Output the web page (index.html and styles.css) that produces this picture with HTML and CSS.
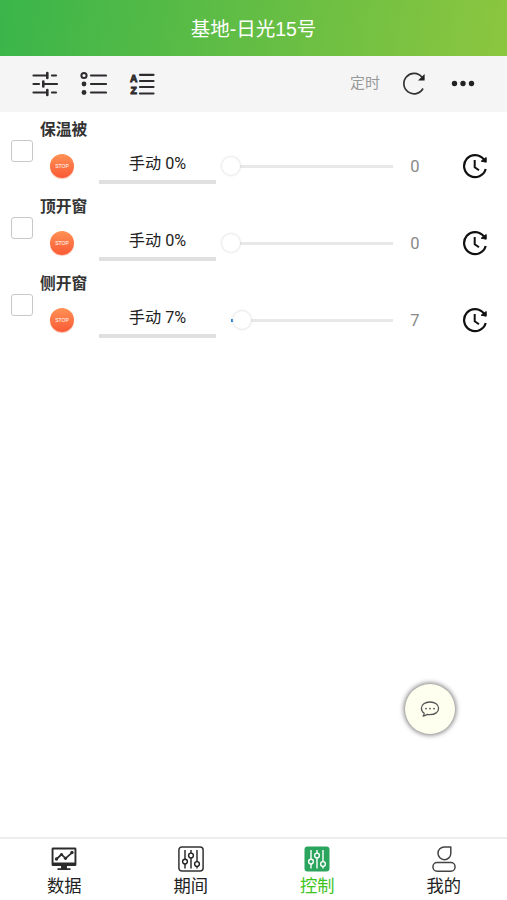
FILE: index.html
```html
<!DOCTYPE html>
<html lang="zh-CN">
<head>
<meta charset="utf-8">
<meta name="viewport" content="width=device-width, initial-scale=1">
<title>基地-日光15号</title>
<link rel="stylesheet" href="styles.css">
</head>
<body>
<svg class="symbols" aria-hidden="true">
  <symbol id="clock" viewBox="0 0 26 26">
    <path d="M22 6.600A11 11 0 1 0 23.700 16" fill="none" stroke="#111" stroke-width="2.200"/>
    <path d="M24.200 4.500v4.700l-5-1z" fill="#111" stroke="#111" stroke-width="1"/>
    <path d="M12.700 7v7.200l4.300 3" fill="none" stroke="#111" stroke-width="2"/>
  </symbol>
  <symbol id="mixer" viewBox="0 0 26 26">
    <g fill="none" stroke="currentColor" stroke-width="1.400">
      <path d="M7 4v9.200M7 18v4.500M13 4v3M13 12v10.500M19 4v11.600M19 20.400v2.100"/>
      <circle cx="7" cy="15.600" r="2.400"/><circle cx="13" cy="9.500" r="2.400"/><circle cx="19" cy="18" r="2.400"/>
    </g>
  </symbol>
</svg>
<header class="header"><h1>基地-日光15号</h1></header>
<div class="toolbar">
  <svg class="tool" width="28" height="28" viewBox="0 0 28 28" fill="none" stroke="#2e2b2e" stroke-width="2.200" stroke-linecap="round">
    <path d="M2.500 5.500H16M21 5.500h4M2.500 14H8M12 14h14M2.500 22.500H16M21 22.500h4"/>
    <path d="M16.300 3v5M12.300 11.500v5M16.300 20v5" stroke-width="2.600"/>
  </svg>
  <svg class="tool" width="28" height="28" viewBox="0 0 28 28" fill="none" stroke="#2e2b2e" stroke-width="2.200" stroke-linecap="round">
    <path d="M12 5.500h15M12 14h15M12 22.500h15"/>
    <circle cx="5" cy="5.500" r="2.600" stroke-width="2"/>
    <g fill="#2e2b2e" stroke="none"><circle cx="5" cy="14" r="2.400"/><circle cx="5" cy="22.500" r="2.400"/></g>
  </svg>
  <svg class="tool" width="28" height="28" viewBox="0 0 28 28" fill="none" stroke="#2e2b2e" stroke-width="2.200" stroke-linecap="round">
    <path d="M12 4.800h13.500M12 11h13.500M12 17h13.500M12 23.500h13.500"/>
    <g class="sort-letter" fill="#2e2b2e" stroke="#2e2b2e" stroke-width=".8" text-anchor="middle"><text x="5.600" y="11.800">A</text><text x="5.600" y="24.400">Z</text></g>
  </svg>
  <span class="timer">定时</span>
  <svg class="refresh" width="24" height="24" viewBox="0 0 24 24">
    <path d="M20 5.200A10.200 10.200 0 1 0 21 16.500" fill="none" stroke="#333" stroke-width="1.700"/>
    <path d="M22.600 2v6.500H16z" fill="#222"/>
  </svg>
  <svg class="more" width="24" height="8" viewBox="0 0 24 8" fill="#222"><circle cx="3.500" cy="3.500" r="2.700"/><circle cx="12" cy="3.500" r="2.700"/><circle cx="20.500" cy="3.500" r="2.700"/></svg>
</div>
<main class="devices">
  <section class="device">
    <span class="check"></span>
    <div class="body">
      <h2>保温被</h2>
      <div class="controls">
        <span class="stop">STOP</span><span class="mode">手动 0%</span>
        <span class="slider" style="--value:0"><i class="fill"></i><i class="thumb"></i></span>
        <span class="value">0</span><svg class="clock"><use href="#clock"/></svg>
      </div>
    </div>
  </section>
  <section class="device">
    <span class="check"></span>
    <div class="body">
      <h2>顶开窗</h2>
      <div class="controls">
        <span class="stop">STOP</span><span class="mode">手动 0%</span>
        <span class="slider" style="--value:0"><i class="fill"></i><i class="thumb"></i></span>
        <span class="value">0</span><svg class="clock"><use href="#clock"/></svg>
      </div>
    </div>
  </section>
  <section class="device">
    <span class="check"></span>
    <div class="body">
      <h2>侧开窗</h2>
      <div class="controls">
        <span class="stop">STOP</span><span class="mode">手动 7%</span>
        <span class="slider" style="--value:7"><i class="fill"></i><i class="thumb"></i></span>
        <span class="value">7</span><svg class="clock"><use href="#clock"/></svg>
      </div>
    </div>
  </section>
</main>
<div class="chat">
  <svg width="20" height="20" viewBox="0 0 20 20">
    <path d="M4.200 14.300C2.300 13 1.400 11.300 1.400 9.300c0-3.800 3.600-6.300 8.600-6.300s8.600 2.500 8.600 6.300-3.600 6.300-8.600 6.300c-1 0-1.900-.1-2.700-.3-1.200 1.100-2.500 1.600-4.200 1.800.7-.8 1.100-1.700 1.100-2.800z" fill="none" stroke="#555" stroke-width="1.300" stroke-linejoin="round"/>
    <g fill="#555"><circle cx="6" cy="9.600" r=".9"/><circle cx="10" cy="9.600" r=".9"/><circle cx="14" cy="9.600" r=".9"/></g>
  </svg>
</div>
<nav class="tabs">
  <a class="tab">
    <svg width="28" height="26" viewBox="0 0 28 26">
      <path d="M3 1.500h22a1.400 1.400 0 0 1 1.400 1.400v15.800a1.400 1.400 0 0 1-1.400 1.400H3a1.400 1.400 0 0 1-1.400-1.400V2.900A1.400 1.400 0 0 1 3 1.500zM3.500 3.400v13.200h21V3.400z" fill="#2b2b2b" fill-rule="evenodd"/>
      <path d="M11 20h6v2.200h3.500V24h-13v-1.800H11z" fill="#2b2b2b"/>
      <path d="M6.500 13l5-4.500 4 3.800 7-6" fill="none" stroke="#2b2b2b" stroke-width="1.700"/>
      <g fill="#2b2b2b"><circle cx="6.500" cy="13" r="1.700"/><circle cx="11.500" cy="8.500" r="1.600"/><circle cx="15.500" cy="12.300" r="1.600"/><circle cx="22" cy="6.500" r="1.700"/></g>
    </svg>
    <span>数据</span>
  </a>
  <a class="tab">
    <svg width="26" height="26" viewBox="0 0 26 26"><rect x=".9" y=".9" width="24.200" height="24.200" rx="3" fill="none" stroke="#333" stroke-width="1.500"/><use href="#mixer"/></svg>
    <span>期间</span>
  </a>
  <a class="tab active">
    <svg width="26" height="26" viewBox="0 0 26 26"><rect x=".5" y=".5" width="25" height="25" rx="3" fill="#2ba55d"/><use class="mixer-light" href="#mixer"/></svg>
    <span>控制</span>
  </a>
  <a class="tab">
    <svg width="26" height="26" viewBox="0 0 26 26" fill="none" stroke="#444" stroke-width="1.500" stroke-linejoin="round"><path d="M19.800 .9h-6.500a6.400 6.400 0 1 0 6.500 6.500z"/><rect x="2" y="16.500" width="22" height="8.700" rx="4"/></svg>
    <span>我的</span>
  </a>
</nav>
</body>
</html>
```
FILE: styles.css
```css
* { box-sizing: border-box; }
body {
  margin: 0;
  height: 900px;
  display: flex;
  flex-direction: column;
  background: #fff;
  color: #222;
  font-family: "Liberation Sans", "Noto Sans CJK SC", sans-serif;
}
svg { display: block; flex: none; }
.symbols { position: absolute; width: 0; height: 0; }
.header {
  height: 56px;
  display: flex;
  align-items: center;
  justify-content: center;
  background: linear-gradient(100deg, #3ab54a, #8cc63f);
  color: #fff;
}
.header h1 { margin: 1px 0 0; font-size: 19.5px; line-height: 28px; font-weight: 400; }
.toolbar {
  height: 56px;
  padding: 0 32px 0 31px;
  display: flex;
  align-items: center;
  background: #f5f5f5;
}
.tool { margin-right: 21px; }
.tool:first-child { margin-right: 20px; }
.sort-letter { font: bold 11.5px "Liberation Mono", monospace; }
.timer { margin: 0 0 2px auto; font-size: 15px; line-height: 20px; color: #999; }
.refresh { margin-left: 22px; }
.more { margin-left: 25px; }
.devices { flex: 1; }
.device { height: 77px; display: flex; }
.check {
  width: 22px;
  height: 22px;
  margin: 28px 7px 0 11px;
  border: 1px solid #c8c8c8;
  border-radius: 3px;
}
.body { flex: 1; }
.body h2 { margin: 7px 0 0; font-size: 15.8px; line-height: 22px; font-weight: 700; color: #333; }
.controls { height: 42px; display: flex; align-items: center; padding-top: 8px; }
.stop {
  width: 24px;
  height: 24px;
  margin: 0 25px 0 10px;
  border-radius: 50%;
  background: linear-gradient(#ff9255, #fa5a35);
  color: #fff;
  font-size: 5px;
  line-height: 24px;
  text-align: center;
  box-shadow: 0 1px 1px #f9c1ad;
}
.mode {
  width: 117px;
  height: 36px;
  border-bottom: 4px solid #e0e0e0;
  font-family: Roboto, "Noto Sans CJK SC", sans-serif;
  font-size: 16.2px;
  line-height: 32px;
  text-align: center;
}
.slider { position: relative; width: 162px; height: 3px; margin-left: 15px; background: #e8e8e8; }
.fill { position: absolute; left: 0; top: 0; width: calc(var(--value) * 1%); height: 3px; background: #1677d8; }
.thumb {
  position: absolute;
  left: calc(var(--value) * 1% - 9px);
  top: -8px;
  width: 18px;
  height: 18px;
  border-radius: 50%;
  background: #fff;
  box-shadow: 0 0 3px #ccc;
}
.value { width: 20px; margin-left: 12px; font-family: Roboto, sans-serif; font-size: 16.5px; text-align: center; color: #888; }
.clock { width: 26px; height: 26px; margin-left: 37px; }
.chat {
  position: absolute;
  left: 405px;
  top: 684px;
  width: 50px;
  height: 50px;
  display: flex;
  align-items: center;
  justify-content: center;
  border-radius: 50%;
  background: #fffff0;
  box-shadow: 0 0 5px 1px #777;
}
.tabs { height: 63px; padding-left: 1px; display: flex; border-top: 2px solid #ececec; }
.tab { flex: 1; display: flex; flex-direction: column; align-items: center; padding-top: 7px; color: #222; }
.tab span { margin-top: 2px; font-size: 17.3px; line-height: 24px; }
.tab.active { color: #3fc41f; }
.mixer-light { color: #fff; }
```
